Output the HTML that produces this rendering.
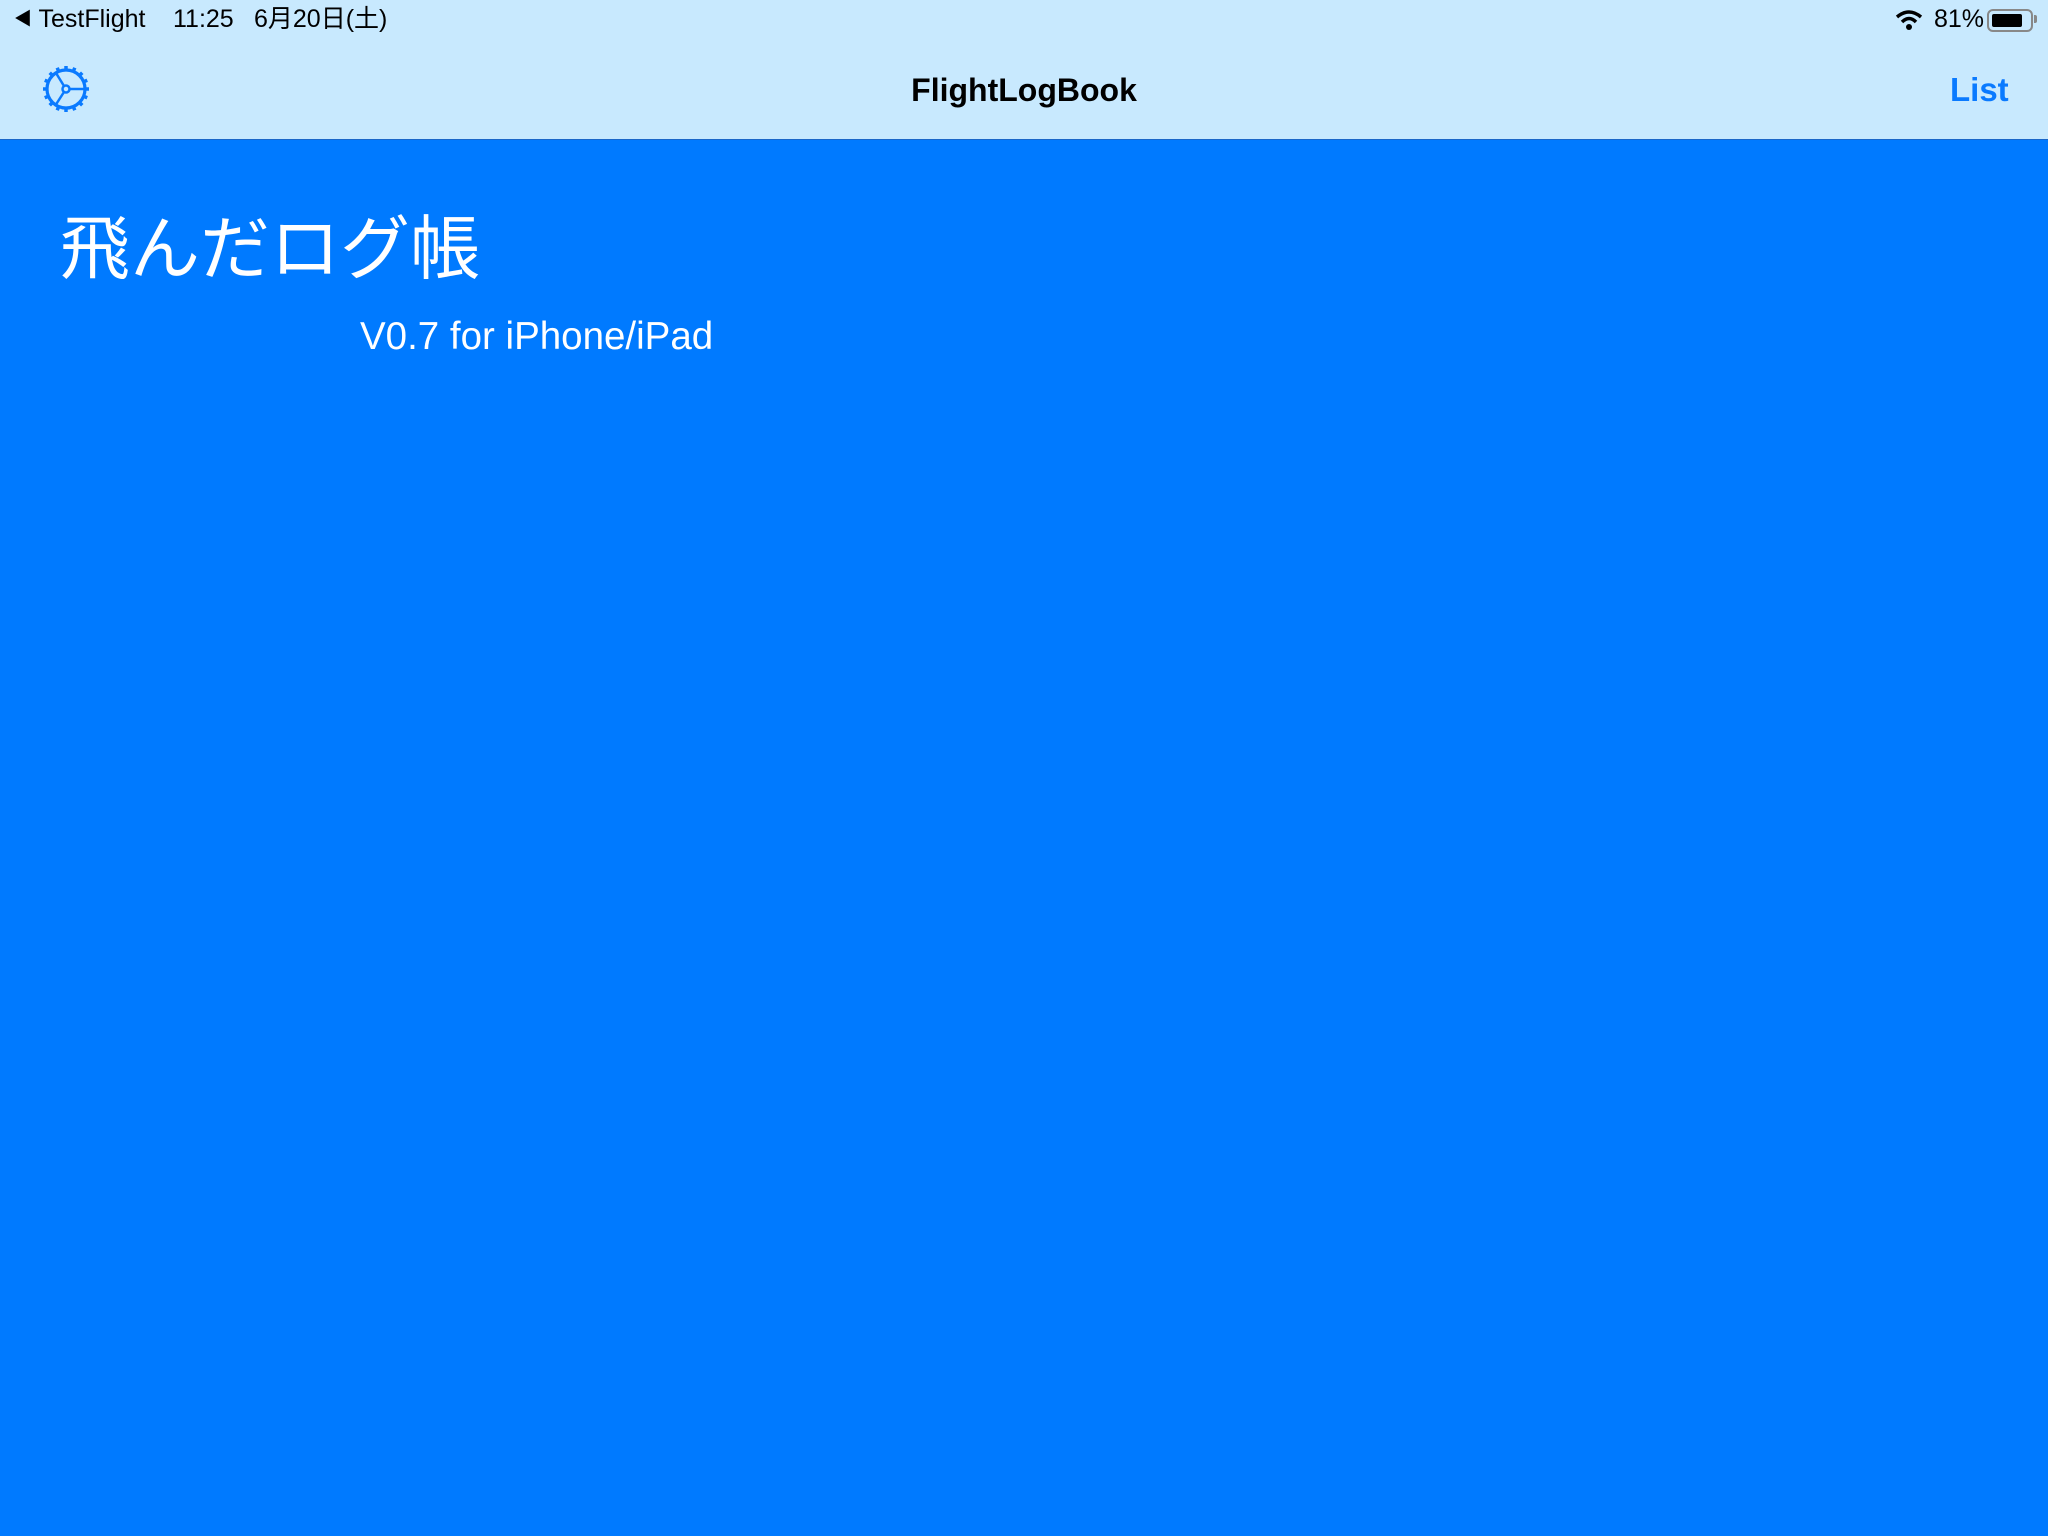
<!DOCTYPE html>
<html><head><meta charset="utf-8"><style>
html,body{margin:0;padding:0;width:2048px;height:1536px;overflow:hidden;background:#007aff;font-family:"Liberation Sans","Noto Sans CJK JP",sans-serif;}
.top{position:absolute;left:0;top:0;width:2048px;height:139px;background:#c8e9fe;border-bottom:1px solid #1a66c8;}
.st{position:absolute;top:4px;font-size:25px;color:#000;white-space:nowrap;line-height:30px;}
.title{position:absolute;left:0;width:2048px;text-align:center;top:72px;font-size:32px;font-weight:bold;color:#000;}
.list{position:absolute;left:1950px;top:71px;font-size:33px;font-weight:bold;color:#0a7aff;}
.h1{position:absolute;left:60px;top:204px;font-size:70px;color:#fff;line-height:90px;white-space:nowrap;}
.v{position:absolute;left:360px;top:314px;font-size:38.5px;color:#fff;white-space:nowrap;line-height:46px;}
</style></head><body>
<div class="top">
<div class="st" style="left:14px;"><span style="font-size:18px;vertical-align:2px">◀</span> TestFlight</div>
<div class="st" style="left:173px;">11:25</div>
<div class="st" style="left:254px;">6月20日(土)</div>
<svg style="position:absolute;left:1895px;top:9px" width="28" height="22" viewBox="0 0 28 22"><path d="M2 8 Q14 -2 26 8" stroke="#000" stroke-width="3.5" fill="none"/><path d="M7 13 Q14 6 21 13" stroke="#000" stroke-width="3.5" fill="none"/><circle cx="14" cy="18" r="3" fill="#000"/></svg>
<div class="st" style="left:1934px;">81%</div>
<div style="position:absolute;left:1987px;top:9px;width:42px;height:19px;border:2px solid #888;border-radius:6px;"><div style="position:absolute;left:3px;top:3px;width:30px;height:13px;background:#000;border-radius:2px"></div></div>
<div style="position:absolute;left:2034px;top:15px;width:3px;height:8px;background:#888;border-radius:0 2px 2px 0"></div>
<svg style="position:absolute;left:41px;top:64px" width="50" height="50" viewBox="0 0 50 50">
<circle cx="25" cy="25" r="19" stroke="#0a7aff" stroke-width="3.2" fill="none"/>
<g stroke="#0a7aff" stroke-width="3.5">
<line x1="25" y1="2" x2="25" y2="7"/><line x1="25" y1="43" x2="25" y2="48"/><line x1="2" y1="25" x2="7" y2="25"/><line x1="43" y1="25" x2="48" y2="25"/>
<g transform="rotate(22.5 25 25)"><line x1="25" y1="2" x2="25" y2="7"/><line x1="25" y1="43" x2="25" y2="48"/><line x1="2" y1="25" x2="7" y2="25"/><line x1="43" y1="25" x2="48" y2="25"/></g>
<g transform="rotate(45 25 25)"><line x1="25" y1="2" x2="25" y2="7"/><line x1="25" y1="43" x2="25" y2="48"/><line x1="2" y1="25" x2="7" y2="25"/><line x1="43" y1="25" x2="48" y2="25"/></g>
<g transform="rotate(67.5 25 25)"><line x1="25" y1="2" x2="25" y2="7"/><line x1="25" y1="43" x2="25" y2="48"/><line x1="2" y1="25" x2="7" y2="25"/><line x1="43" y1="25" x2="48" y2="25"/></g>
</g>
<circle cx="25" cy="25" r="3.5" stroke="#0a7aff" stroke-width="2.5" fill="none"/>
<g stroke="#0a7aff" stroke-width="2.5"><line x1="28.5" y1="25" x2="44" y2="25"/><line x1="23" y1="22" x2="15" y2="9"/><line x1="23" y1="28" x2="14" y2="42"/></g>
</svg>
<div class="title">FlightLogBook</div>
<div class="list">List</div>
</div>
<div class="h1">飛んだログ帳</div>
<div class="v">V0.7 for iPhone/iPad</div>
</body></html>
